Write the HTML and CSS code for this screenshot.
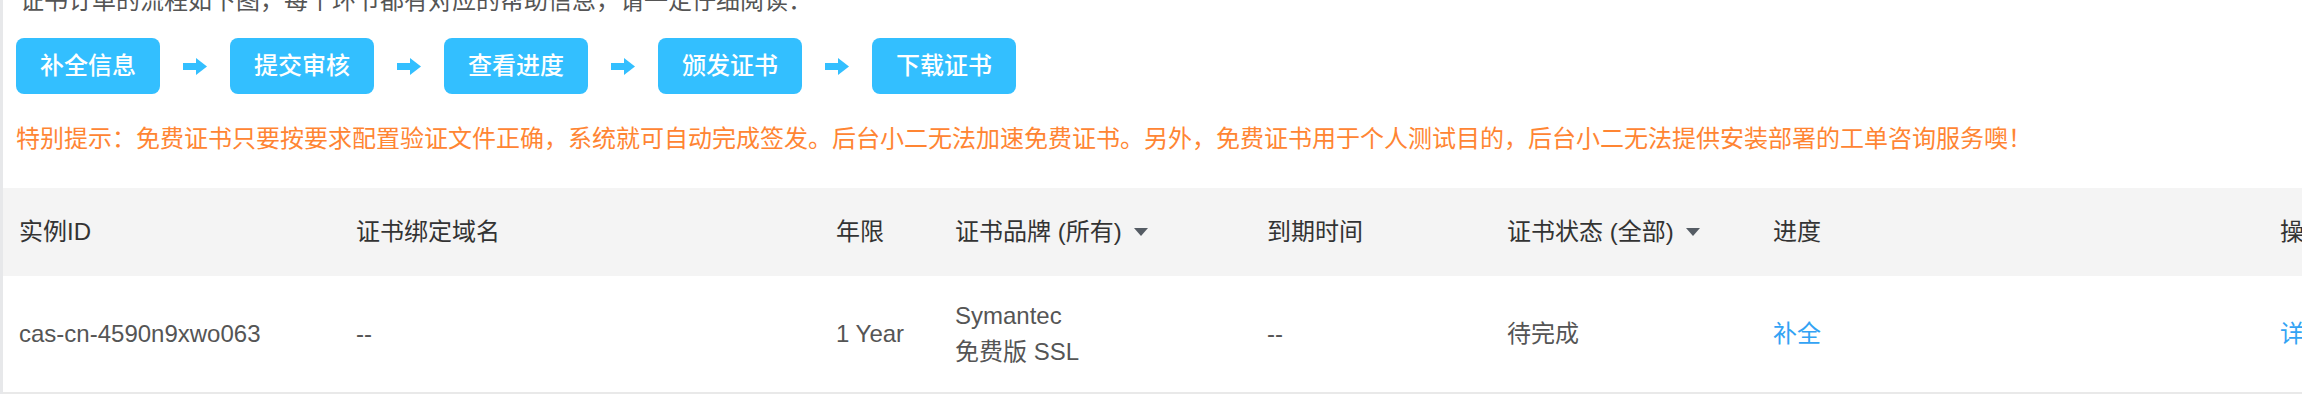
FILE: index.html
```html
<!DOCTYPE html>
<html lang="zh-CN">
<head>
<meta charset="utf-8">
<title>证书订单</title>
<link rel="stylesheet" href="styles.css">
</head>
<body>
<div class="page">
  <p class="intro">证书订单的流程如下图，每个环节都有对应的帮助信息，请一定仔细阅读：</p>
  <div class="steps">
    <span class="step">补全信息</span>
    <svg class="arrow" width="24" height="17" viewBox="0 0 24 17"><rect x="0" y="5" width="15" height="7"/><polygon points="13,0 24,8.5 13,17"/></svg>
    <span class="step">提交审核</span>
    <svg class="arrow" width="24" height="17" viewBox="0 0 24 17"><rect x="0" y="5" width="15" height="7"/><polygon points="13,0 24,8.5 13,17"/></svg>
    <span class="step">查看进度</span>
    <svg class="arrow" width="24" height="17" viewBox="0 0 24 17"><rect x="0" y="5" width="15" height="7"/><polygon points="13,0 24,8.5 13,17"/></svg>
    <span class="step">颁发证书</span>
    <svg class="arrow" width="24" height="17" viewBox="0 0 24 17"><rect x="0" y="5" width="15" height="7"/><polygon points="13,0 24,8.5 13,17"/></svg>
    <span class="step">下载证书</span>
  </div>
  <p class="tip">特别提示：免费证书只要按要求配置验证文件正确，系统就可自动完成签发。后台小二无法加速免费证书。另外，免费证书用于个人测试目的，后台小二无法提供安装部署的工单咨询服务噢！</p>
  <div class="table">
    <div class="row head">
      <div class="cell">实例ID</div>
      <div class="cell">证书绑定域名</div>
      <div class="cell">年限</div>
      <div class="cell">证书品牌 (所有)<span class="caret"></span></div>
      <div class="cell">到期时间</div>
      <div class="cell">证书状态 (全部)<span class="caret"></span></div>
      <div class="cell">进度</div>
      <div class="cell">操作</div>
    </div>
    <div class="row data">
      <div class="cell">cas-cn-4590n9xwo063</div>
      <div class="cell">--</div>
      <div class="cell">1 Year</div>
      <div class="cell">Symantec<br>免费版 SSL</div>
      <div class="cell">--</div>
      <div class="cell">待完成</div>
      <div class="cell"><a class="link" href="#">补全</a></div>
      <div class="cell"><a class="link" href="#">详情</a></div>
    </div>
  </div>
</div>
</body>
</html>
```

FILE: styles.css
```css
html, body {
  margin: 0;
  padding: 0;
  background: #fff;
  overflow: hidden;
}

body {
  font-family: "Liberation Sans", "Noto Sans CJK SC", sans-serif;
  font-size: 24px;
  line-height: 36px;
}

.page {
  border-left: 3px solid #e7e8ea;
  min-height: 400px;
  box-sizing: border-box;
}

.intro {
  margin: -17px 0 0;
  padding-left: 17px;
  color: #555;
  white-space: nowrap;
}

.steps {
  display: flex;
  align-items: center;
  gap: 23px;
  margin-top: 19px;
  padding-left: 13px;
}

.step {
  width: 144px;
  height: 56px;
  border-radius: 8px;
  background: #33bfff;
  color: #fff;
  display: flex;
  align-items: center;
  justify-content: center;
  font-weight: 500;
  flex: none;
}

.arrow {
  fill: #33bfff;
  flex: none;
}

.tip {
  margin: 27px 0 0;
  padding-left: 13px;
  color: #ff8533;
  white-space: nowrap;
}

.table {
  margin-top: 31px;
}

.row {
  display: grid;
  grid-template-columns: 337px 480px 119px 312px 240px 266px 507px 200px;
  align-items: center;
}

.head {
  background: #f4f4f4;
  height: 88px;
  color: #333;
}

.data {
  height: 116px;
  border-bottom: 2px solid #e9e9e9;
  color: #555;
}

.cell {
  padding-left: 16px;
  white-space: nowrap;
  display: flex;
  align-items: center;
}

.data .cell {
  display: block;
}

.caret {
  display: inline-block;
  width: 0;
  height: 0;
  margin-left: 12px;
  border-left: 7.5px solid transparent;
  border-right: 7.5px solid transparent;
  border-top: 8px solid #555c64;
}

.link {
  color: #33a3f4;
  text-decoration: none;
}
```
